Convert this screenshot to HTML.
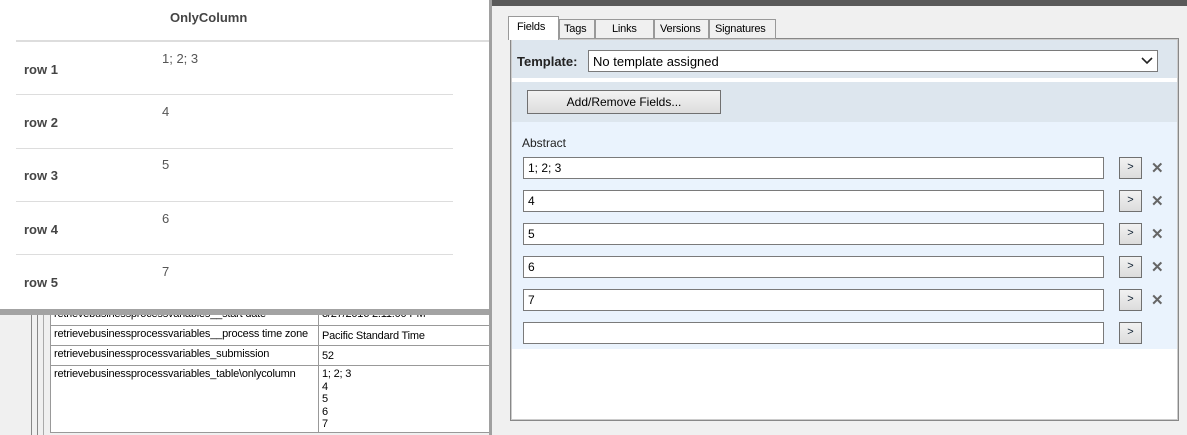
<!DOCTYPE html>
<html><head><style>
body{margin:0;width:1187px;height:435px;position:relative;overflow:hidden;background:#f0f0f0;font-family:"Liberation Sans",Arial,sans-serif;}
div{box-sizing:border-box;}
.a{position:absolute;}
.lbl{font-size:13px;font-weight:bold;color:#444;}
.val{font-size:13px;color:#555;}
.hr{height:1px;background:#ddd;}
.fld{position:absolute;left:523px;width:581px;height:22px;background:#fff;border:1px solid #7a7a7a;font-size:12px;padding:3px 4px;}
.btn{position:absolute;left:1119px;width:23px;height:22px;border:1px solid #707070;background:linear-gradient(#f2f2f2,#dcdcdc);font-size:11px;text-align:center;line-height:19px;color:#123;}
.x{position:absolute;left:1151px;font-size:15px;color:#666;font-weight:bold;}
.t{font-size:11px;color:#000;letter-spacing:-0.2px;white-space:nowrap;}
</style></head><body>
<div class="a" style="left:0;top:310px;width:491px;height:125px;background:#f0f0f0"></div>
<div class="a" style="left:31px;top:310px;width:1px;height:125px;background:#888"></div>
<div class="a" style="left:37px;top:310px;width:1px;height:125px;background:#888"></div>
<div class="a" style="left:43px;top:310px;width:1px;height:125px;background:#aaa"></div>
<div class="a" style="left:50px;top:300px;width:440px;height:133px;background:#fff;border:1px solid #999;border-top:none"></div>
<div class="a" style="left:318px;top:300px;width:1px;height:133px;background:#999"></div>
<div class="a" style="left:50px;top:325px;width:440px;height:1px;background:#999"></div>
<div class="a" style="left:50px;top:345px;width:440px;height:1px;background:#999"></div>
<div class="a" style="left:50px;top:365px;width:440px;height:1px;background:#999"></div>
<div class="a t" style="left:54px;top:308px;">retrievebusinessprocessvariables__start date</div>
<div class="a t" style="left:322px;top:308px;">3/27/2016 2:11:00 PM</div>
<div class="a t" style="left:54px;top:328px;">retrievebusinessprocessvariables__process time zone</div>
<div class="a t" style="left:322px;top:330px;">Pacific Standard Time</div>
<div class="a t" style="left:54px;top:348px;">retrievebusinessprocessvariables_submission</div>
<div class="a t" style="left:322px;top:350px;">52</div>
<div class="a t" style="left:54px;top:368px;">retrievebusinessprocessvariables_table\onlycolumn</div>
<div class="a t" style="left:322px;top:368px;line-height:12.5px">1; 2; 3<br>4<br>5<br>6<br>7</div>
<div class="a" style="left:0;top:0;width:489px;height:310px;background:#fff"></div>
<div class="a" style="left:0;top:309px;width:491px;height:6px;background:#a3a3a3"></div>
<div class="a lbl" style="left:170px;top:10px;">OnlyColumn</div>
<div class="a" style="left:16px;top:40px;width:473px;height:2px;background:#ddd"></div>
<div class="a lbl" style="left:24px;top:62px">row 1</div><div class="a val" style="left:162px;top:51px">1; 2; 3</div>
<div class="a hr" style="left:16px;top:94px;width:437px"></div>
<div class="a lbl" style="left:24px;top:115px">row 2</div><div class="a val" style="left:162px;top:104px">4</div>
<div class="a hr" style="left:16px;top:148px;width:437px"></div>
<div class="a lbl" style="left:24px;top:168px">row 3</div><div class="a val" style="left:162px;top:157px">5</div>
<div class="a hr" style="left:16px;top:201px;width:437px"></div>
<div class="a lbl" style="left:24px;top:222px">row 4</div><div class="a val" style="left:162px;top:211px">6</div>
<div class="a hr" style="left:16px;top:254px;width:437px"></div>
<div class="a lbl" style="left:24px;top:275px">row 5</div><div class="a val" style="left:162px;top:264px">7</div>
<div class="a" style="left:489px;top:0;width:3px;height:435px;background:#a0a0a0"></div>
<div class="a" style="left:492px;top:0;width:695px;height:6px;background:#5a5a5a"></div>
<div class="a" style="left:510px;top:38px;width:669px;height:383px;background:#fff;border:1px solid #888;box-shadow:inset 0 0 0 1px #ccc"></div>
<div class="a t" style="left:508px;top:16px;width:51px;height:24px;background:#fff;border:1px solid #999;border-bottom:none;padding:4px 0 0 8px">Fields</div>
<div class="a t" style="left:559px;top:19px;width:36px;height:20px;border:1px solid #999;padding:3px 0 0 4px">Tags</div>
<div class="a t" style="left:595px;top:19px;width:59px;height:20px;border:1px solid #999;padding:3px 0 0 16px">Links</div>
<div class="a t" style="left:654px;top:19px;width:55px;height:20px;border:1px solid #999;padding:3px 0 0 5px">Versions</div>
<div class="a t" style="left:709px;top:19px;width:67px;height:20px;border:1px solid #999;padding:3px 0 0 5px">Signatures</div>
<div class="a" style="left:512px;top:40px;width:665px;height:38px;background:#dde6ee"></div>
<div class="a" style="left:517px;top:54px;font-size:13px;font-weight:bold;color:#222">Template:</div>
<div class="a" style="left:588px;top:50px;width:570px;height:22px;background:#fff;border:1px solid #7a7a7a;font-size:13px;padding:3px 4px">No template assigned<svg style="position:absolute;right:4px;top:5px" width="12" height="10"><path d="M1 2 L6 7 L11 2" stroke="#222" stroke-width="1.6" fill="none"/></svg></div>
<div class="a" style="left:512px;top:82px;width:665px;height:40px;background:#dde6ee"></div>
<div class="a" style="left:527px;top:90px;width:194px;height:24px;border:1px solid #707070;background:linear-gradient(#f3f3f3,#dddddd);font-size:12px;text-align:center;line-height:22px">Add/Remove Fields...</div>
<div class="a" style="left:512px;top:122px;width:665px;height:227px;background:#eaf3fd"></div>
<div class="a" style="left:522px;top:136px;font-size:12px;color:#222">Abstract</div>
<div class="fld" style="top:157px">1; 2; 3</div><div class="btn" style="top:157px">&gt;</div><div class="x" style="top:159px">✕</div>
<div class="fld" style="top:190px">4</div><div class="btn" style="top:190px">&gt;</div><div class="x" style="top:192px">✕</div>
<div class="fld" style="top:223px">5</div><div class="btn" style="top:223px">&gt;</div><div class="x" style="top:225px">✕</div>
<div class="fld" style="top:256px">6</div><div class="btn" style="top:256px">&gt;</div><div class="x" style="top:258px">✕</div>
<div class="fld" style="top:289px">7</div><div class="btn" style="top:289px">&gt;</div><div class="x" style="top:291px">✕</div>
<div class="fld" style="top:322px"></div><div class="btn" style="top:322px">&gt;</div>
</body></html>
